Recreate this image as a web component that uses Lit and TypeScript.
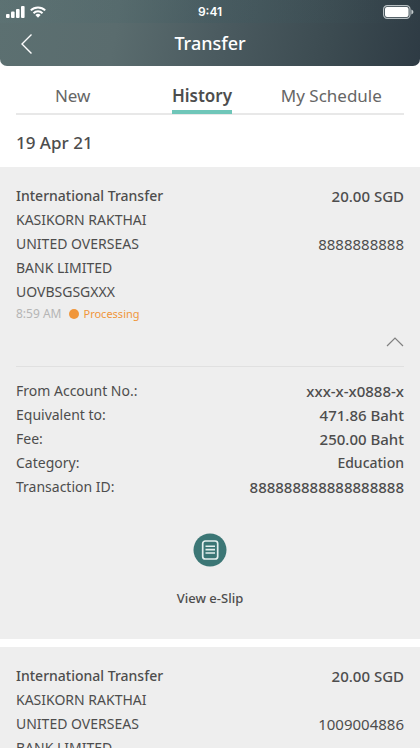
import { LitElement, html, css, nothing } from "lit";
import { customElement, property, state } from "lit/decorators.js";
import { classMap } from "lit/directives/class-map.js";

interface Transfer {
  kind: string;
  amount: string;
  lines: string[];
  account: string;
  time: string;
  status: string;
  details: [string, string][];
}

const transfers: Transfer[] = [
  {
    kind: "International Transfer",
    amount: "20.00 SGD",
    lines: ["KASIKORN RAKTHAI", "UNITED OVERSEAS", "BANK LIMITED", "UOVBSGSGXXX"],
    account: "8888888888",
    time: "8:59 AM",
    status: "Processing",
    details: [
      ["From Account No.:", "xxx-x-x0888-x"],
      ["Equivalent to:", "471.86 Baht"],
      ["Fee:", "250.00 Baht"],
      ["Category:", "Education"],
      ["Transaction ID:", "888888888888888888"],
    ],
  },
  {
    kind: "International Transfer",
    amount: "20.00 SGD",
    lines: ["KASIKORN RAKTHAI", "UNITED OVERSEAS", "BANK LIMITED"],
    account: "1009004886",
    time: "",
    status: "",
    details: [],
  },
];

@customElement("transfer-card")
export class TransferCard extends LitElement {
  @property({ attribute: false }) transfer!: Transfer;
  @state() private open = true;

  static styles = css`
    :host {
      display: block;
      background: #eeeeee;
      padding: 17px 16px 29px;
      color: #4d4d4d;
      font-size: 14px;
      line-height: 24px;
    }
    .row {
      display: flex;
      justify-content: space-between;
    }
    .medium {
      font-weight: 500;
    }
    .number {
      font-size: 15px;
    }
    .meta {
      display: flex;
      align-items: center;
      gap: 8px;
      font-size: 12px;
      line-height: 20px;
      color: #b5b5b5;
    }
    .status {
      display: flex;
      align-items: center;
      gap: 4px;
      font-size: 11px;
      color: #f0963a;
    }
    .dot {
      width: 10px;
      height: 10px;
      border-radius: 50%;
      background: #f0963a;
    }
    button {
      border: 0;
      background: none;
      font: inherit;
      color: inherit;
      padding: 0;
      cursor: pointer;
    }
    .toggle {
      display: flex;
      margin: 6px 0 12px auto;
      padding: 4px 0;
    }
    .details {
      margin: 0;
      padding-top: 12px;
      border-top: 1px solid #e0e0e0;
    }
    dd {
      margin: 0;
    }
    .slip {
      display: flex;
      flex-direction: column;
      align-items: center;
      gap: 19px;
      margin: 34px auto 0;
      font-size: 13px;
      font-weight: 500;
    }
    svg {
      display: block;
    }
  `;

  render() {
    const t = this.transfer;
    return html`
      <div class="row medium"><span>${t.kind}</span><span class="number">${t.amount}</span></div>
      ${t.lines.map(
        (line, i) => html`<div class="row">
          <span>${line}</span>
          ${i === 1 ? html`<span class="number">${t.account}</span>` : nothing}
        </div>`
      )}
      ${t.status
        ? html`<div class="meta">
              <span>${t.time}</span>
              <span class="status"><span class="dot"></span>${t.status}</span>
            </div>
            <button
              class="toggle"
              aria-label="Toggle details"
              aria-expanded=${this.open}
              @click=${() => (this.open = !this.open)}
            >
              <svg width="18" height="16" viewBox="0 0 18 16" fill="none" stroke="#808080" stroke-width="1.2">
                <path d=${this.open ? "M1 12 9 4l8 8" : "M1 4l8 8 8-8"} />
              </svg>
            </button>`
        : nothing}
      ${this.open && t.details.length
        ? html`<dl class="details">
              ${t.details.map(
                ([k, v]) => html`<div class="row">
                  <dt>${k}</dt>
                  <dd class=${classMap({ medium: true, number: /\d/.test(v) })}>${v}</dd>
                </div>`
              )}
            </dl>
            <button class="slip">
              <svg width="34" height="34" viewBox="0 0 34 34" fill="none">
                <circle cx="17" cy="17" r="16.5" fill="#3b7675" />
                <rect x="9.7" y="8" width="15" height="18" rx="2.6" stroke="#e4efee" stroke-width="1.7" />
                <path d="M12.5 13.2h9.5M12.5 16.6h9.5M12.5 20h9.5" stroke="#e4efee" stroke-width="1.6" />
              </svg>
              View e-Slip
            </button>`
        : nothing}
    `;
  }
}

@customElement("app-root")
export class AppRoot extends LitElement {
  @state() private tab = "History";

  static styles = css`
    :host {
      display: flex;
      flex-direction: column;
      height: 100vh;
      background: #ffffff;
      color: #4d4d4d;
      font-family: "Noto Sans", sans-serif;
    }
    button {
      border: 0;
      background: none;
      font: inherit;
      color: inherit;
      padding: 0;
      cursor: pointer;
    }
    svg {
      display: block;
    }
    .top {
      flex: none;
      border-radius: 0 0 7px 7px;
      background: linear-gradient(100deg, #5c7071 0%, #5a6c6e 28%, #4b5b60 52%, #3c4b51 78%, #2e3b44 100%);
      color: #ffffff;
    }
    .bar {
      display: grid;
      grid-template-columns: 1fr auto 1fr;
      align-items: center;
    }
    .system {
      height: 23px;
      padding: 0 6px;
      font: 600 12px Inter, sans-serif;
      background: linear-gradient(90deg, #5e777840, #3b5a6040, #2a414800);
    }
    .signals {
      display: flex;
      align-items: center;
      gap: 5px;
    }
    .end {
      justify-self: end;
    }
    .title {
      height: 43px;
      padding: 0 16px;
    }
    .back {
      padding-bottom: 2px;
    }
    h1 {
      margin: 0;
      padding-bottom: 4px;
      font-size: 18px;
      line-height: 24px;
      font-weight: 500;
    }
    .tabs {
      flex: none;
      display: grid;
      grid-template-columns: repeat(3, 1fr);
      justify-items: center;
      padding: 18px 24px 0 8px;
    }
    .tab {
      position: relative;
      height: 30px;
      padding-bottom: 2px;
      border-bottom: 4px solid transparent;
      font-size: 17px;
      line-height: 24px;
      color: #666666;
      font-weight: 400;
    }
    .tab.active {
      color: #4d4d4d;
      font-weight: 600;
      border-color: #6fc6b9;
    }
    .rule {
      flex: none;
      height: 2px;
      margin: -1px 16px 0;
      background: #e8e8e8;
    }
    main {
      flex: 1;
      min-height: 0;
      overflow-y: auto;
      scrollbar-width: none;
    }
    h2 {
      margin: 0;
      padding: 16px 16px 12px;
      font-size: 17px;
      line-height: 24px;
      font-weight: 500;
    }
    .list {
      display: grid;
      gap: 8px;
    }
  `;

  render() {
    return html`
      <header class="top">
        <div class="bar system">
          <div class="signals">
            <svg width="19" height="12" viewBox="0 0 19 12" fill="#fff">
              <rect y="8" width="3.6" height="4" rx="1" />
              <rect x="5" y="5.6" width="3.6" height="6.4" rx="1" />
              <rect x="10" y="3" width="3.6" height="9" rx="1" />
              <rect x="15" width="3.6" height="12" rx="1" />
            </svg>
            <svg width="16" height="12" viewBox="0 0 16 12" fill="none" stroke="#fff" stroke-width="2">
              <path d="M.8 4.4a10.2 10.2 0 0 1 14.4 0M3.5 7.2a6.4 6.4 0 0 1 9 0" />
              <path d="M8 11.7 5.4 9.1a3.7 3.7 0 0 1 5.2 0Z" fill="#fff" stroke="none" />
            </svg>
          </div>
          <span>9:41</span>
          <svg class="end" width="31" height="14" viewBox="0 0 31 14" fill="none">
            <rect x=".6" y=".6" width="26.4" height="12.8" rx="3.6" stroke="#b8c0c3" stroke-width="1.2" />
            <rect x="2" y="2" width="23.6" height="10" rx="2" fill="#fff" />
            <path d="M28.4 4.5v5c1.2-.5 2-1.4 2-2.5s-.8-2-2-2.5Z" fill="#c5ccce" />
          </svg>
        </div>
        <div class="bar title">
          <button class="back" aria-label="Back">
            <svg width="20" height="22" viewBox="0 0 20 22" fill="none" stroke="#fff" stroke-width="1.4">
              <path d="M15.5 1.5 6 11l9.5 9.5" />
            </svg>
          </button>
          <h1>Transfer</h1>
        </div>
      </header>
      <nav class="tabs">
        ${["New", "History", "My Schedule"].map(
          (name) => html`<button
            class=${classMap({ tab: true, active: this.tab === name })}
            @click=${() => (this.tab = name)}
          >
            ${name}
          </button>`
        )}
      </nav>
      <div class="rule"></div>
      <main>
        <h2>19 Apr 21</h2>
        <div class="list">
          ${transfers.map((t) => html`<transfer-card .transfer=${t}></transfer-card>`)}
        </div>
      </main>
    `;
  }
}
